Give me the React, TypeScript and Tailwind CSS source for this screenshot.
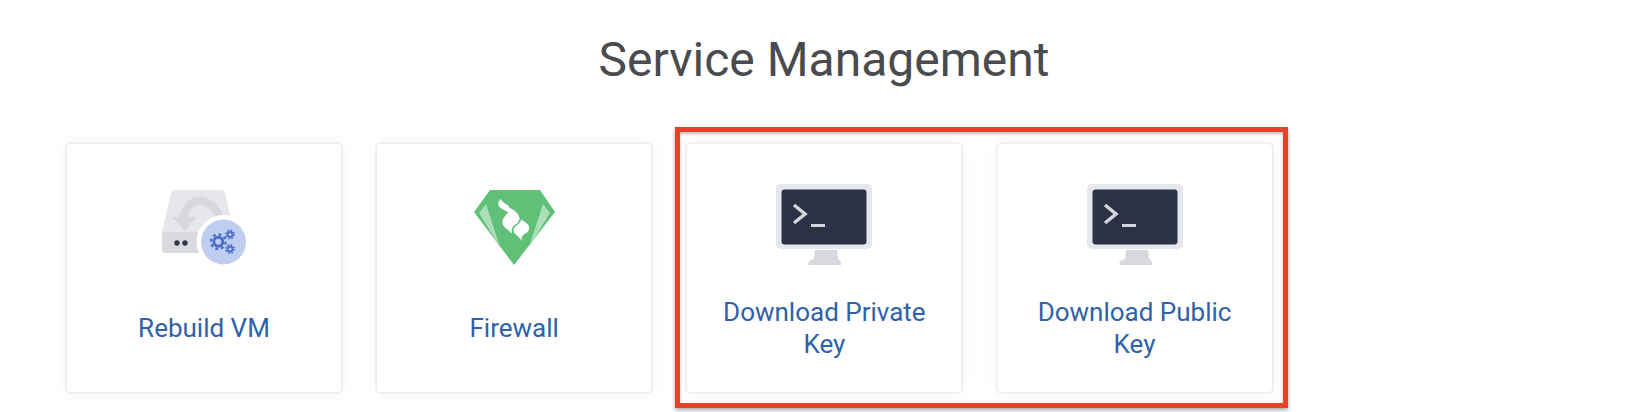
const RebuildIcon = () => (
  <svg width="84" height="75" viewBox="0 0 84 75" fill="none" className="blur-[0.5px]">
    <path d="M12 0H59C61 0 62 1 63 3L72 42H0L9 3C10 1 10.500 0 12 0Z" fill="#e6e7ec" />
    <path d="M0 42H72V63H3C1 63 0 62 0 60Z" fill="#d9dadf" />
    <path d="M58 30C55 17 46 11 37 11C29 11 23 18 21.500 28" stroke="#d6d8dc" strokeWidth="8" />
    <path d="M10 27H34L23 41Z" fill="#d6d8dc" />
    <circle cx="15" cy="53" r="2.700" fill="#33364a" />
    <circle cx="23" cy="53" r="2.700" fill="#33364a" />
    <circle cx="61.500" cy="52" r="27" fill="#ffffff" />
    <circle cx="61.500" cy="52" r="22.500" fill="#bfcef0" />
    <circle cx="56.300" cy="51.700" r="4.500" stroke="#4a6fc9" strokeWidth="3" />
    <circle cx="56.300" cy="51.700" r="7.300" stroke="#4a6fc9" strokeWidth="2.400" strokeDasharray="2.900 2.830" />
    <circle cx="68" cy="44.500" r="2.500" stroke="#4a6fc9" strokeWidth="1.800" />
    <circle cx="68" cy="44.500" r="4.200" stroke="#4a6fc9" strokeWidth="1.500" strokeDasharray="1.700 1.600" />
    <circle cx="68" cy="59" r="2.500" stroke="#4a6fc9" strokeWidth="1.800" />
    <circle cx="68" cy="59" r="4.200" stroke="#4a6fc9" strokeWidth="1.500" strokeDasharray="1.700 1.600" />
  </svg>
);

const FirewallIcon = () => (
  <svg width="81" height="75" viewBox="0 0 81 75" fill="none" className="blur-[0.5px]">
    <path d="M16 0H66L81 22L40 75L0 22Z" fill="#60c077" />
    <path d="M12 14L5 23L26 57Z" fill="#aadfb9" />
    <path d="M69 14L76 23L55 57Z" fill="#aadfb9" />
    <path d="M27 9C24 11 23.500 14 25.500 17C28 20 33 20 36 25C37 20 36 17 33.500 15C30.500 13 28.500 12.500 27 9Z" fill="#ffffff" />
    <path d="M36 18C37 22 30 25 28.500 31C27.500 37 33 39 38 43.500C37 39 38.500 36 43 33.500C48 29 45.500 23 36 18Z" fill="#ffffff" />
    <path d="M47 29.500C47.500 34 40 35 39.500 40C39.500 44.500 45 46 47.500 50.500C47.500 46 49.500 44.500 53 42.500C58 38 54.500 33 47 29.500Z" fill="#ffffff" />
  </svg>
);

const TerminalIcon = () => (
  <svg width="96" height="81" viewBox="0 0 96 81" fill="none" className="blur-[0.5px]">
    <rect width="96" height="65" rx="5" fill="#e6e7ed" />
    <rect x="5.500" y="5.500" width="85" height="55" rx="3" fill="#2d3146" />
    <path d="M39 66H61L62 75C64 76 66 78 65 81H33C31 78 34 76 38 75Z" fill="#d8d9dd" />
    <path d="M18 21L29 30L18 39" stroke="#d5d6da" strokeWidth="3.500" />
    <rect x="35" y="40" width="14" height="3" fill="#d5d6da" />
  </svg>
);

const cards = [
  { label: "Rebuild VM", icon: <RebuildIcon /> },
  { label: "Firewall", icon: <FirewallIcon /> },
  { label: "Download Private Key", icon: <TerminalIcon /> },
  { label: "Download Public Key", icon: <TerminalIcon /> },
];

const App = () => {
  return (
    <div className="relative h-[412px] w-[1626px] overflow-hidden bg-white font-['Roboto',sans-serif]">
      <h2 className="pt-[28px] pl-[22px] text-center text-[48px] leading-[64px] font-normal text-[#4a4b4f]">
        Service Management
      </h2>

      <div className="mt-[50px] flex gap-[32.2px] pl-[65px]">
        {cards.map((card) => (
          <div
            key={card.label}
            className="flex h-[252px] w-[278px] flex-col rounded-[6px] border-2 border-[#eeeef3] bg-white shadow-[0_0_16px_rgba(40,40,70,0.04)]"
          >
            <div className="flex h-[121px] items-end justify-center">{card.icon}</div>
            <div className="flex flex-1 items-center justify-center px-[24px] pb-[2px] text-center text-[26px] leading-[32px] text-[#2f62a8]">
              {card.label}
            </div>
          </div>
        ))}
      </div>

      {/* red highlight drawn over the two download cards */}
      <div className="absolute top-[127px] left-[675px] h-[281px] w-[613px] border-[5px] border-[#e8412a] shadow-[0_2px_4px_rgba(0,0,0,0.35),inset_0_2px_3px_rgba(0,0,0,0.25)]" />
    </div>
  );
};

export default App;
